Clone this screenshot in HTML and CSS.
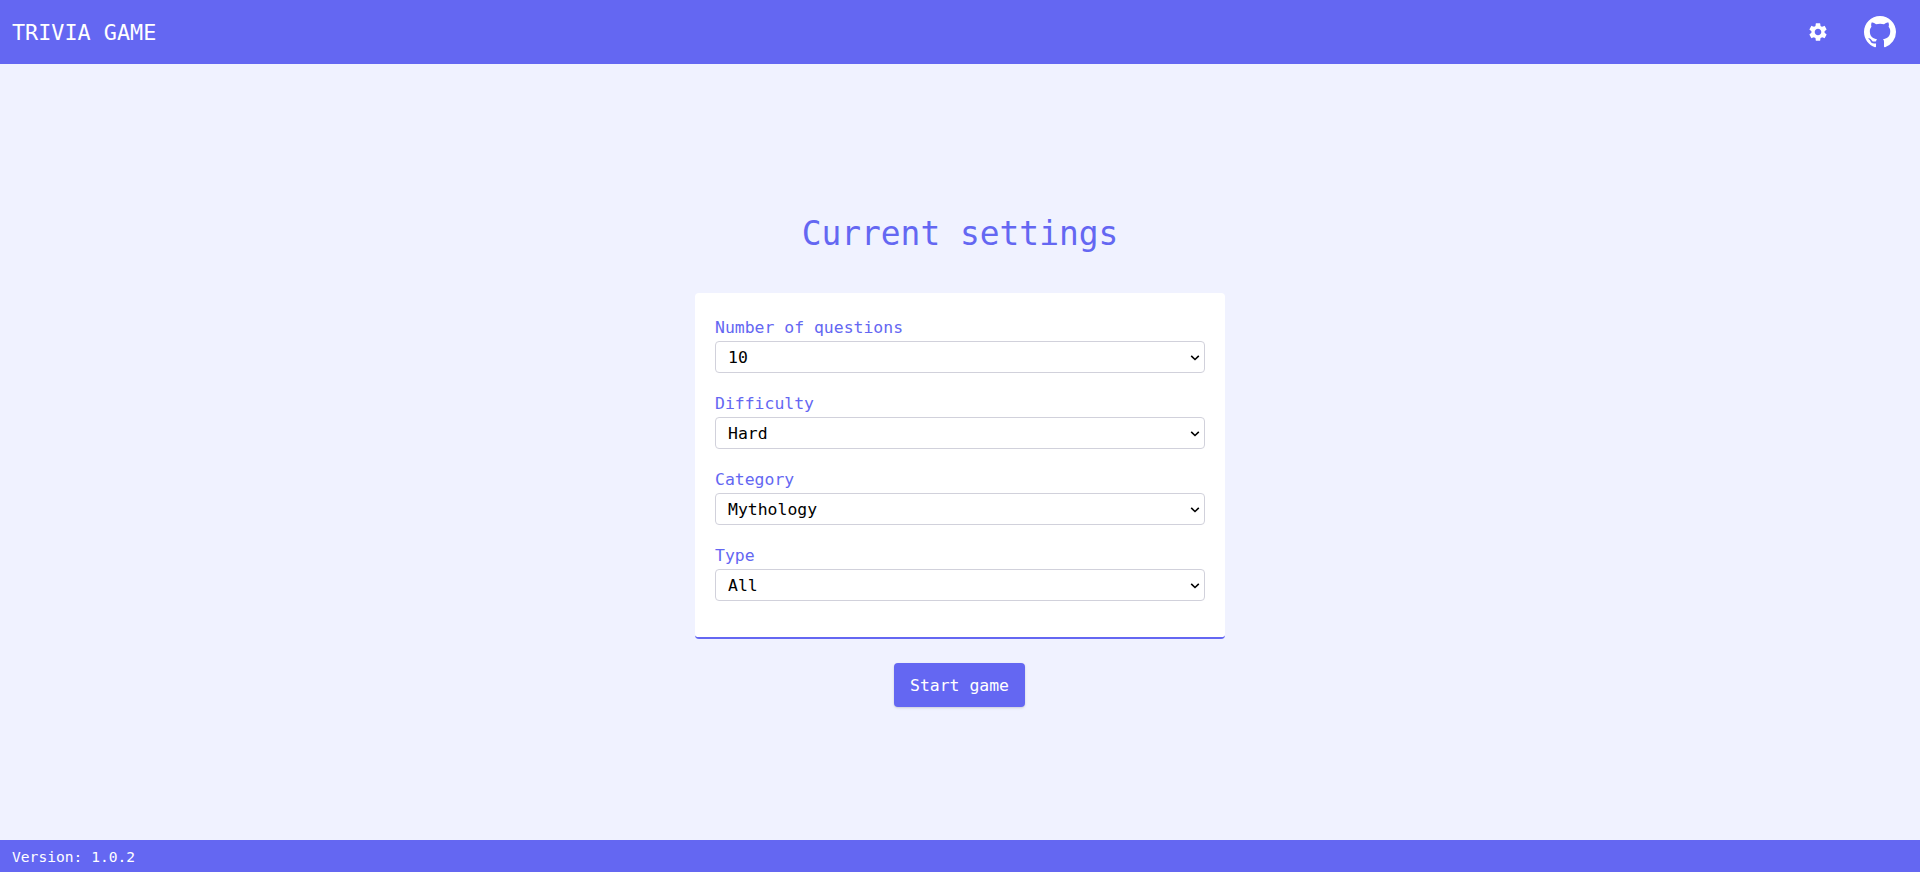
FILE: index.html
```html
<!DOCTYPE html>
<html lang="en">
<head>
<meta charset="utf-8">
<title>Trivia Game</title>
<link rel="stylesheet" href="styles.css">
</head>
<body>
<header class="header">
  <span class="brand">TRIVIA GAME</span>
  <nav class="nav">
    <svg class="icon-gear" viewBox="0 0 24 24"><path fill="currentColor" d="M19.14 12.94c.04-.3.06-.61.06-.94 0-.32-.02-.64-.07-.94l2.03-1.58a.49.49 0 0 0 .12-.61l-1.92-3.32a.488.488 0 0 0-.59-.22l-2.39.96c-.5-.38-1.03-.7-1.62-.94l-.36-2.54a.484.484 0 0 0-.48-.41h-3.84c-.24 0-.43.17-.47.41l-.36 2.54c-.59.24-1.13.57-1.62.94l-2.39-.96c-.22-.08-.47 0-.59.22L2.74 8.87c-.12.21-.08.47.12.61l2.03 1.58c-.05.3-.09.63-.09.94s.02.64.07.94l-2.03 1.58a.49.49 0 0 0-.12.61l1.92 3.32c.12.22.37.29.59.22l2.39-.96c.5.38 1.03.7 1.62.94l.36 2.54c.05.24.24.41.48.41h3.84c.24 0 .44-.17.47-.41l.36-2.54c.59-.24 1.13-.56 1.62-.94l2.39.96c.22.08.47 0 .59-.22l1.92-3.32c.12-.22.07-.47-.12-.61l-2.01-1.58zM12 15.6c-1.98 0-3.6-1.62-3.6-3.6s1.62-3.6 3.6-3.6 3.6 1.62 3.6 3.6-1.62 3.6-3.6 3.6z"/></svg>
    <svg class="icon-github" viewBox="0 0 16 16"><path fill="currentColor" d="M8 0C3.58 0 0 3.58 0 8c0 3.54 2.29 6.53 5.47 7.59.4.07.55-.17.55-.38 0-.19-.01-.82-.01-1.49-2.01.37-2.53-.49-2.69-.94-.09-.23-.48-.94-.82-1.13-.28-.15-.68-.52-.01-.53.63-.01 1.08.58 1.23.82.72 1.21 1.87.87 2.33.66.07-.52.28-.87.51-1.07-1.78-.2-3.64-.89-3.64-3.95 0-.87.31-1.59.82-2.15-.08-.2-.36-1.02.08-2.12 0 0 .67-.21 2.2.82.64-.18 1.32-.27 2-.27s1.36.09 2 .27c1.53-1.04 2.2-.82 2.2-.82.44 1.1.16 1.92.08 2.12.51.56.82 1.27.82 2.15 0 3.07-1.87 3.75-3.65 3.95.29.25.54.73.54 1.48 0 1.07-.01 1.93-.01 2.2 0 .21.15.46.55.38A8.01 8.01 0 0 0 16 8c0-4.42-3.58-8-8-8z"/></svg>
  </nav>
</header>
<main class="main">
  <h1 class="title">Current settings</h1>
  <form class="card">
    <div class="field"><label class="label" for="n">Number of questions</label><select class="select" id="n"><option>10</option></select></div>
    <div class="field"><label class="label" for="d">Difficulty</label><select class="select" id="d"><option>Hard</option></select></div>
    <div class="field"><label class="label" for="c">Category</label><select class="select" id="c"><option>Mythology</option></select></div>
    <div class="field"><label class="label" for="t">Type</label><select class="select" id="t"><option>All</option></select></div>
  </form>
  <button class="start">Start game</button>
</main>
<footer class="footer">Version: 1.0.2</footer>
</body>
</html>
```
FILE: styles.css
```css
* { box-sizing: border-box; }
body {
  margin: 0;
  height: 100vh;
  display: flex;
  flex-direction: column;
  background: #f0f2ff;
  font-family: Consolas, "DejaVu Sans Mono", monospace;
  font-size: 16.44px;
}
.header {
  height: 64px;
  padding: 0 24px 0 12px;
  display: flex;
  align-items: center;
  justify-content: space-between;
  background: #6467f2;
  color: #fff;
}
.brand { padding-top: 2px; font-size: 21.8px; line-height: 32px; }
.nav { display: flex; align-items: center; gap: 35px; }
.icon-gear { width: 22px; height: 22px; }
.icon-github { width: 32px; height: 32px; }
.main {
  flex: 1;
  display: flex;
  flex-direction: column;
  align-items: center;
  padding-top: 150px;
}
.title {
  margin: 0 0 39px;
  font-size: 32.88px;
  font-weight: 400;
  line-height: 40px;
  color: #6467f2;
}
.card {
  width: 530px;
  padding: 20px;
  background: #fff;
  border-bottom: 2px solid #6467f2;
  border-radius: 4px;
}
.field { margin-bottom: 16px; }
.label {
  display: block;
  height: 28px;
  line-height: 30px;
  color: #6467f2;
}
.select {
  display: block;
  width: 100%;
  height: 32px;
  padding: 0 12px;
  border: 1px solid #d1d1db;
  border-radius: 4px;
  appearance: none;
  background: #fff url("data:image/svg+xml,%3Csvg xmlns='http://www.w3.org/2000/svg' width='10' height='6' viewBox='0 0 10 6'%3E%3Cpath d='M1.2 .9L5 4.5 8.8 .9' fill='none' stroke='%23000' stroke-width='1.6'/%3E%3C/svg%3E") no-repeat right 4px top 13px;
  color: #000;
  font: inherit;
}
.start {
  margin: 24px 1px 0 0;
  width: 131px;
  height: 44px;
  padding: 0;
  border: 0;
  border-radius: 4px;
  background: #6467f2;
  color: #fff;
  font: inherit;
  box-shadow: 0 1px 3px rgba(0, 0, 0, 0.1), 0 1px 2px rgba(0, 0, 0, 0.06);
}
.footer {
  height: 32px;
  padding-left: 12px;
  background: #6467f2;
  color: #fff;
  font-size: 14.61px;
  line-height: 34px;
}
```
